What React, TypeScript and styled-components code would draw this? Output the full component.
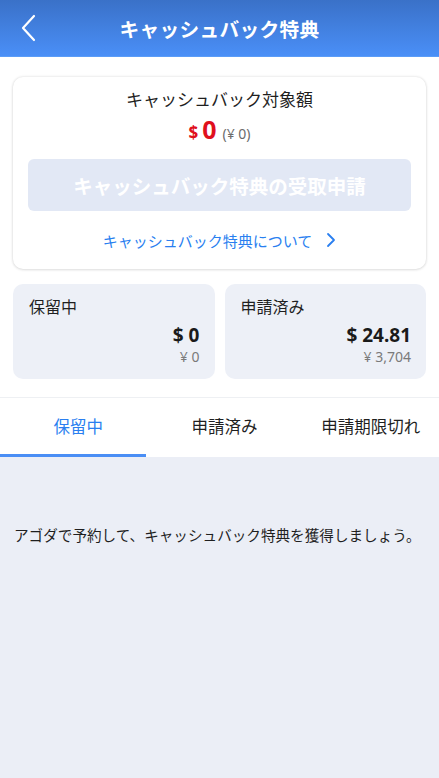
import React from "react";
import styled, { createGlobalStyle } from "styled-components";

const GlobalStyle = createGlobalStyle`
  html, body {
    margin: 0;
    padding: 0;
    background: #ffffff;
  }
  body {
    font-family: "Noto Sans", "Noto Sans CJK JP", sans-serif;
    color: #1f1f1f;
  }
  * {
    box-sizing: border-box;
  }
`;

const Page = styled.div`
  display: flex;
  flex-direction: column;
  min-height: 100vh;
  background: #ffffff;
`;

const Header = styled.header`
  position: relative;
  display: flex;
  align-items: center;
  justify-content: center;
  height: 57px;
  background: linear-gradient(180deg, #3a71c8 0%, #4a8ff7 100%);
  border-bottom: 1px solid #5b9cf7;
`;

const BackButton = styled.button`
  position: absolute;
  left: 14px;
  top: 12px;
  width: 28px;
  height: 32px;
  padding: 0;
  border: none;
  background: transparent;
  display: flex;
  align-items: center;
  justify-content: center;
`;

const Title = styled.h1`
  margin: 0;
  font-size: 19.7px;
  font-weight: 700;
  color: #ffffff;
  letter-spacing: 0.3px;
`;

const Main = styled.main`
  padding: 20px 13px 0;
`;

const CashbackCard = styled.section`
  display: flex;
  flex-direction: column;
  align-items: stretch;
  padding: 11px 15px 18px;
  background: #ffffff;
  border-radius: 10px;
  box-shadow: 0 0 3px rgba(0, 0, 0, 0.14), 0 1px 3px rgba(0, 0, 0, 0.08);
`;

const CardTitle = styled.div`
  text-align: center;
  font-size: 17px;
  line-height: 24px;
  font-weight: 400;
  color: #1f1f1f;
`;

const AmountLine = styled.div`
  display: flex;
  align-items: baseline;
  justify-content: center;
  gap: 4px;
  height: 30px;
  margin-bottom: 17px;
`;

const Currency = styled.span`
  font-size: 17px;
  font-weight: 700;
  color: #e0101d;
`;

const BigValue = styled.span`
  font-size: 25px;
  font-weight: 700;
  color: #e0101d;
  margin-right: 2px;
`;

const SubValue = styled.span`
  font-size: 14px;
  color: #6b6b6b;
`;

const ClaimButton = styled.button`
  height: 52px;
  border: none;
  border-radius: 6px;
  background: #e2e8f5;
  color: #ffffff;
  font-family: inherit;
  font-size: 19.5px;
  font-weight: 700;
`;

const InfoLink = styled.a`
  display: flex;
  align-items: center;
  justify-content: center;
  gap: 14px;
  margin-top: 18px;
  height: 22px;
  font-size: 15px;
  color: #2a7ff0;
  text-decoration: none;
`;

const SummaryRow = styled.div`
  display: grid;
  grid-template-columns: 1fr 1fr;
  gap: 10px;
  margin-top: 15px;
`;

const SummaryBox = styled.div`
  display: flex;
  flex-direction: column;
  padding: 12px 15px 13px 16px;
  background: #edf0f7;
  border-radius: 10px;
`;

const SummaryLabel = styled.div`
  font-size: 16px;
  line-height: 22px;
  color: #1f1f1f;
`;

const SummaryAmount = styled.div`
  margin-top: 5px;
  text-align: right;
  font-size: 19px;
  line-height: 24px;
  font-weight: 700;
  color: #1a1a1a;
`;

const SummaryYen = styled.div`
  margin-top: 1px;
  text-align: right;
  font-size: 14px;
  line-height: 18px;
  color: #7a7a7a;
`;

const Tabs = styled.nav`
  display: grid;
  grid-template-columns: repeat(3, 1fr);
  height: 60px;
  margin-top: 18px;
  border-top: 1px solid #eef0f3;
`;

const Tab = styled.div<{ $active?: boolean }>`
  display: flex;
  align-items: center;
  justify-content: center;
  padding-left: 10px;
  font-size: 16.5px;
  color: ${(p) => (p.$active ? "#2a7ff0" : "#1f1f1f")};
  border-bottom: 3px solid ${(p) => (p.$active ? "#4a8ef5" : "transparent")};
`;

const Content = styled.div`
  flex: 1;
  background: #ebeef6;
  padding: 67px 14px 0;
`;

const EmptyText = styled.p`
  margin: 0;
  font-size: 14.6px;
  line-height: 22px;
  color: #1f1f1f;
`;

const App = () => {
  return (
    <Page>
      <GlobalStyle />
      <Header>
        <BackButton aria-label="戻る">
          <svg width="16" height="28" viewBox="0 0 16 28" fill="none">
            <path d="M14 2 L3 14 L14 26" stroke="#ffffff" strokeWidth="2.2" strokeLinecap="round" strokeLinejoin="round" />
          </svg>
        </BackButton>
        <Title>キャッシュバック特典</Title>
      </Header>
      <Main>
        <CashbackCard>
          <CardTitle>キャッシュバック対象額</CardTitle>
          <AmountLine>
            <Currency>$</Currency>
            <BigValue>0</BigValue>
            <SubValue>(¥ 0)</SubValue>
          </AmountLine>
          <ClaimButton disabled>キャッシュバック特典の受取申請</ClaimButton>
          <InfoLink href="#">
            キャッシュバック特典について
            <svg width="10" height="16" viewBox="0 0 10 16" fill="none">
              <path d="M2 2 L8 8 L2 14" stroke="#2a7ff0" strokeWidth="1.8" strokeLinecap="round" strokeLinejoin="round" />
            </svg>
          </InfoLink>
        </CashbackCard>
        <SummaryRow>
          <SummaryBox>
            <SummaryLabel>保留中</SummaryLabel>
            <SummaryAmount>$ 0</SummaryAmount>
            <SummaryYen>¥ 0</SummaryYen>
          </SummaryBox>
          <SummaryBox>
            <SummaryLabel>申請済み</SummaryLabel>
            <SummaryAmount>$ 24.81</SummaryAmount>
            <SummaryYen>¥ 3,704</SummaryYen>
          </SummaryBox>
        </SummaryRow>
      </Main>
      <Tabs>
        <Tab $active>保留中</Tab>
        <Tab>申請済み</Tab>
        <Tab>申請期限切れ</Tab>
      </Tabs>
      <Content>
        <EmptyText>アゴダで予約して、キャッシュバック特典を獲得しましょう。</EmptyText>
      </Content>
    </Page>
  );
};

export default App;
